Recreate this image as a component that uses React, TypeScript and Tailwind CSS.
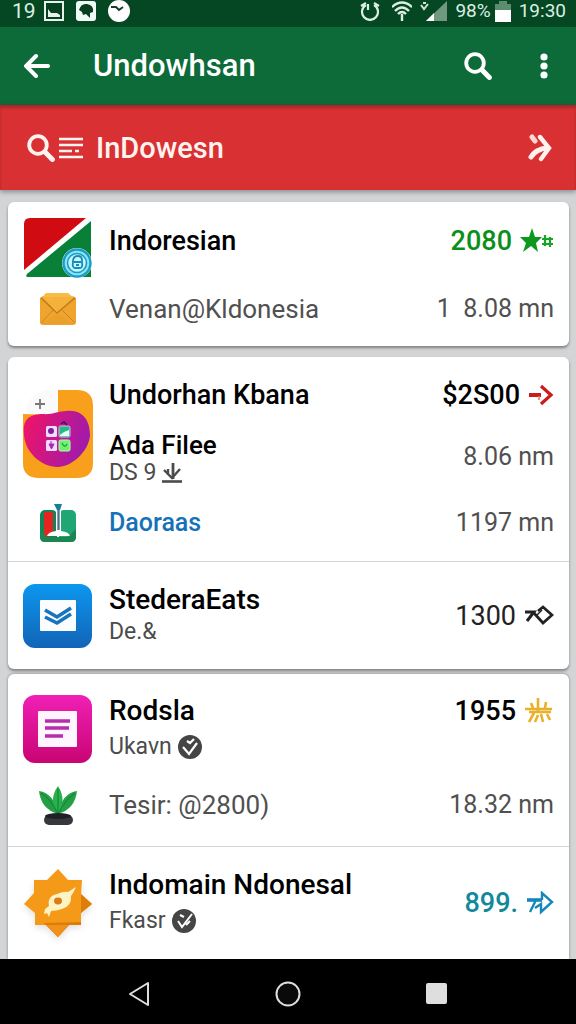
import React from 'react';

interface IconProps {
  className?: string;
}

const titleClass = 'text-[27px] leading-8 font-medium text-black';
const largeTitleClass = 'text-[28px] leading-8 font-medium text-black';
const textClass = 'text-[26px] leading-8 text-[#505050]';
const subClass = 'flex items-center gap-1.5 text-[23px] leading-8 text-[#4c4c4c]';
const valueClass = 'text-[25px] leading-8 text-[#505050] whitespace-pre';

const SearchIcon = ({ className }: IconProps) => (
  <svg viewBox="0 0 28 28" className={className} fill="none" stroke="currentColor">
    <circle cx="11" cy="11" r="8.8" strokeWidth="3.8" />
    <path d="M18 18L25.4 25.4" strokeWidth="5" strokeLinecap="round" />
  </svg>
);

const FlagIcon = () => (
  <svg viewBox="0 0 70 62" className="w-[70px] h-[62px]">
    <path d="M7 1H63L1 53V7Q1 1 7 1Z" fill="#d00c12" />
    <path d="M68 4V60H5Q2 60 4 57Z" fill="#088038" />
    <circle cx="54" cy="46" r="15" fill="#fff" />
    <circle cx="54" cy="46" r="13.5" fill="#8be6f8" stroke="#1b9bc6" strokeWidth="2.4" />
    <circle cx="54" cy="46" r="9.5" fill="#c4f7ff" stroke="#1b9bc6" strokeWidth="1.6" />
    <path d="M50 45Q50 39 54.500 39Q59 39 59 43V45Q60 51 57 51H52Q49 51 50 45ZM51 45H58M53 48H56" fill="none" stroke="#168bb8" strokeWidth="1.8" />
  </svg>
);

const MailIcon = () => (
  <svg viewBox="0 0 38 34" className="w-[38px] h-[34px]">
    <path d="M6 2Q6 1 8 1H29L35 6V22H3V6Z" fill="#f8bb45" />
    <path d="M1 6L4 4L18 21L34 4L37 6V30Q37 33 34 33H4Q1 33 1 30Z" fill="#efa52d" />
    <path d="M4 5H34L19 20Z" fill="#f5b23b" />
    <path d="M2 32L18 22L36 32" fill="#eaa02a" />
    <path d="M2 31L14 18M36 31L23 18" stroke="#c98522" strokeWidth="1" />
    <path d="M2 6L18 21L36 6" fill="none" stroke="#bd7718" strokeWidth="1.3" />
  </svg>
);

const GalleryIcon = () => (
  <svg viewBox="0 0 70 90" className="w-[70px] h-[90px]">
    <defs>
      <linearGradient id="blob" x1="0" y1="0.3" x2="1" y2="0.6">
        <stop offset="0" stopColor="#ed1469" />
        <stop offset="1" stopColor="#9d1bae" />
      </linearGradient>
    </defs>
    <path d="M35 1H54Q70 1 70 17V74Q70 89 54 89H16Q0 89 0 74V25L35 26Z" fill="#f8a01c" />
    <path d="M35 1V25H3Q3 8 21 1Z" fill="#fafafa" />
    <path d="M1 46C-1 29 8 25 20 25C28 26 36 22 43 22C61 20 67 33 67 46C66 63 48 78 35 78C18 78 2 63 1 46Z" fill="url(#blob)" />
    <path d="M17 10V20M12 15H22" stroke="#777" strokeWidth="1.8" />
    <rect x="23" y="37" width="11" height="11" rx="1.500" fill="#f2dcff" />
    <rect x="36" y="37" width="11" height="11" rx="1.500" fill="#27b884" stroke="#c6c8f0" />
    <rect x="23" y="51" width="11" height="11" rx="1.500" fill="#f2dcff" />
    <rect x="36" y="51" width="11" height="11" rx="1.500" fill="#6ff26a" stroke="#b8f8c8" />
    <circle cx="28" cy="42" r="3" fill="#7b1fa2" />
    <path d="M26 55H31L28.500 60ZM28 52V58" fill="#a829b0" stroke="#a829b0" />
    <path d="M37 46L41 43L46 41V47H37Z" fill="#e2fff4" />
    <path d="M39 54Q42 60 44 55" stroke="#24a548" strokeWidth="1.5" fill="none" />
    <path d="M38 35L41 33L44 36" stroke="#43115b" strokeWidth="1.5" fill="none" />
  </svg>
);

const BookIcon = () => (
  <svg viewBox="0 0 38 40" className="w-[38px] h-10">
    <rect x="1" y="7" width="17" height="32" rx="5" fill="#138455" />
    <rect x="20" y="7" width="17" height="32" rx="5" fill="#20a574" />
    <path d="M1 26V34Q1 39 6 39H32Q37 39 37 34V26L29 34H9Z" fill="#188751" />
    <path d="M5 9H14V31L10 34Q5 34 5 28Z" fill="#e52421" />
    <path d="M17 7H22V28Q30 29 31 33H8Q9 29 17 28Z" fill="#fff" />
    <path d="M19.500 4V27" stroke="#53738a" strokeWidth="2.4" />
    <path d="M15 1H23L21 7H18Z" fill="#167e9d" />
  </svg>
);

const BlueAppIcon = () => (
  <svg viewBox="0 0 70 64" className="w-[70px] h-16">
    <defs>
      <linearGradient id="blue" x1="0" y1="0" x2="0" y2="1">
        <stop offset="0" stopColor="#0c97ee" />
        <stop offset="1" stopColor="#1264b7" />
      </linearGradient>
    </defs>
    <rect width="69" height="64" rx="12" fill="url(#blue)" />
    <rect x="17" y="16" width="36" height="31" rx="1" fill="#fbfdff" />
    <path d="M22 26L34 33L48 24M22 33L34 39L48 30" fill="none" stroke="#1975bb" strokeWidth="3.6" />
  </svg>
);

const PinkAppIcon = () => (
  <svg viewBox="0 0 70 68" className="w-[70px] h-[68px]">
    <defs>
      <linearGradient id="pink" x1="0" y1="0" x2="0" y2="1">
        <stop offset="0" stopColor="#f020b5" />
        <stop offset="1" stopColor="#c80573" />
      </linearGradient>
    </defs>
    <rect width="69" height="68" rx="12" fill="url(#pink)" />
    <rect x="15" y="16" width="39" height="36" rx="1" fill="#fff5ff" />
    <path d="M22 26H47M22 33H46M22 41H40" stroke="#b62eaa" strokeWidth="3.4" />
  </svg>
);

const PlantIcon = () => (
  <svg viewBox="0 0 40 40" className="w-10 h-10">
    <path d="M20 29Q3 24 1 6Q16 8 20 29Z" fill="#23a046" />
    <path d="M20 29Q37 24 39 6Q24 8 20 29Z" fill="#23a046" />
    <path d="M20 1Q10 15 20 29Q29 15 20 1Z" fill="#2bb04e" />
    <path d="M3 8Q14 15 20 29Q27 15 37 8M20 4V28" fill="none" stroke="#0d7931" strokeWidth="0.9" />
    <rect x="6" y="30" width="29" height="10" rx="5" fill="#37383d" />
    <ellipse cx="20" cy="31" rx="13" ry="3" fill="#202125" />
  </svg>
);

const BadgeIcon = () => (
  <svg viewBox="0 0 70 70" className="w-[70px] h-[70px] drop-shadow-md">
    <path d="M35 1L45 12H59L58 26L69 36L58 45V57H46L35 69L23 57H12V45L1 36L11 25V12H24Z" fill="#f59a18" />
    <path d="M20 55L58 54V57H46L35 69L23 57Z" fill="#dd7c08" />
    <path d="M35 57L46 57L35 69L23 57Z" fill="#f0921a" />
    <path d="M58 26L69 36L58 45Z" fill="#df7d0b" />
    <path d="M53 19Q51 24 48 28Q49 38 39 41Q33 43 28 43L26 49L24 45L21 46L22 41L26 38Q24 28 34 26Q41 23 45 24Z" fill="#fff3c4" />
    <ellipse cx="35" cy="33" rx="4" ry="3.4" fill="#d77d18" />
  </svg>
);

const StarIcon = () => (
  <svg viewBox="0 0 34 26" className="w-[34px] h-[26px]" fill="#0c981c">
    <path d="M12 0L15 9L22 9L16 15L18 24L11 18L3 24L6 15L0 9L9 9Z" />
    <path d="M22 11H33M22 16H33M25 7V18M30 9V19" stroke="#17a528" strokeWidth="2.2" />
  </svg>
);

const RedArrow = () => (
  <svg viewBox="0 0 26 24" className="w-[26px] h-6" fill="none" stroke="#c91c1c">
    <path d="M1 12H13" strokeWidth="4" />
    <path d="M13 3L23 12L13 21" strokeWidth="3.2" />
    <path d="M11 17V13" strokeWidth="1.6" stroke="#e77a70" />
  </svg>
);

const DiamondArrow = () => (
  <svg viewBox="0 0 30 24" className="w-[30px] h-6" fill="none" stroke="#222">
    <path d="M9 8L19 19L28 11L19 3L14 7" strokeWidth="2.8" />
    <path d="M1 8H10L3 17" strokeWidth="3" />
    <path d="M12 12L18 6" strokeWidth="1.4" />
  </svg>
);

const SparkIcon = () => (
  <svg viewBox="0 0 30 26" className="w-[30px] h-[26px]" fill="none" stroke="#e8b128" strokeWidth="2.6">
    <path d="M1 11H28M5 14H27M14 0V13M7 5L9 10M22 4L21 10M10 15L5 24M14 17L11 24M17 16L19 24M23 16L26 22" />
  </svg>
);

const BlueArrow = () => (
  <svg viewBox="0 0 28 24" className="w-7 h-6" fill="none" stroke="#1488bd">
    <path d="M1 9H16" strokeWidth="3.6" />
    <path d="M10 9L4 21M16 9V2L26 11L15 21V13L9 17" strokeWidth="2.4" />
  </svg>
);

const CheckBadge = ({ slash }: { slash?: boolean }) => (
  <svg viewBox="0 0 24 24" className="w-6 h-6">
    <circle cx="12" cy="12" r="12" fill="#454545" />
    {slash ? (
      <path d="M6 12L10 18L20 5M8 6L12 8M14 16L18 12" fill="none" stroke="#fff" strokeWidth="2" />
    ) : (
      <path d="M5 12L11 19L19 8M9 6L12 8L16 4" fill="none" stroke="#fff" strokeWidth="2.2" />
    )}
  </svg>
);

const DownloadIcon = () => (
  <svg viewBox="0 0 20 20" className="w-5 h-5" fill="none" stroke="#4c4c4c">
    <path d="M11 0V16" strokeWidth="2.8" />
    <path d="M2 7L10 15L18 6M6 6V12" strokeWidth="2.4" />
    <path d="M0 18.500H20" strokeWidth="2.6" />
  </svg>
);

const Price = ({ value, color, icon }: { value: string; color: string; icon: React.ReactNode }) => (
  <div className={`flex items-center gap-2 text-[27px] leading-8 ${color}`}>
    <span>{value}</span>
    {icon}
  </div>
);

const IconCell = ({ children, className = '' }: { children: React.ReactNode; className?: string }) => (
  <div className={`w-[70px] shrink-0 flex justify-center ${className}`}>{children}</div>
);

const StatusBar = () => (
  <div className="h-[27px] pb-[5px] pl-3 pr-[10px] flex items-center justify-between bg-[#044722] text-[#dcefe2] text-[21px] leading-5">
    <div className="flex items-center gap-3">
      <span className="-mr-1">19</span>
      <svg viewBox="0 0 20 20" className="w-5 h-5">
        <rect x="1" y="1" width="18" height="18" fill="#064020" stroke="#e6f2ea" strokeWidth="2" />
        <path d="M4 16V8L7 12H13L16 14V16Z" fill="#e6f2ea" />
      </svg>
      <svg viewBox="0 0 20 20" className="w-5 h-5">
        <rect width="20" height="20" rx="3" fill="#f2faf5" />
        <path d="M3 9Q5 2 11 3Q18 4 17 11L14 12V17L10 13L7 14L6 11Z" fill="#073f20" />
      </svg>
      <svg viewBox="0 0 22 22" className="w-[22px] h-[22px]">
        <circle cx="11" cy="11" r="11" fill="#fff" />
        <path d="M3 7L8 7L11 10L15 7" fill="none" stroke="#173d27" strokeWidth="2" />
      </svg>
    </div>
    <div className="flex items-center gap-2">
      <svg viewBox="0 0 20 20" className="w-5 h-5 mr-1" fill="none" stroke="currentColor" strokeWidth="2.2">
        <path d="M6 4A8 8 0 1 0 14 4M1 5L6 2M19 5L14 2M8 3V9" />
      </svg>
      <svg viewBox="0 0 20 20" className="w-5 h-5" fill="none" stroke="currentColor" strokeWidth="2.4">
        <path d="M0 6Q10-3 20 6M3 10Q10 3 17 10M6 13Q10 9 14 13M10 13V20" />
      </svg>
      <svg viewBox="0 0 27 20" className="w-[27px] h-5">
        <path d="M27 0V20H6Z" fill="#6f9a80" />
        <path d="M14 12V20H6Z" fill="#fff" />
        <path d="M1 4L4 8L8 3M3 2H6" fill="none" stroke="#cde4d4" strokeWidth="2" />
      </svg>
      <span className="text-[19px]">98%</span>
      <svg viewBox="0 0 16 21" className="w-4 h-[21px] -ml-1">
        <path d="M4 0H12V3H16V10H0V3H4Z" fill="#5d8c70" />
        <rect y="9" width="16" height="12" fill="#fff" />
      </svg>
      <span className="text-[19px]">19:30</span>
    </div>
  </div>
);

const App: React.FC = () => {
  return (
    <div className="min-h-screen flex flex-col bg-[#d2d4d6] font-[Roboto,sans-serif]">
      <StatusBar />

      <header className="h-[78px] pl-6 pr-5 flex items-center bg-[#0d6b3a] text-white">
        <button aria-label="Back" className="mr-[43px]">
          <svg viewBox="0 0 26 26" className="w-[26px] h-[26px]" fill="none" stroke="currentColor" strokeWidth="4" strokeLinecap="round">
            <path d="M12 3L2 13L12 23M3 13H24" />
          </svg>
        </button>
        <h1 className="flex-1 text-[31px] leading-10 font-medium">Undowhsan</h1>
        <button aria-label="Search" className="mr-10">
          <SearchIcon className="w-7 h-7" />
        </button>
        <button aria-label="More" className="w-6 flex justify-center">
          <svg viewBox="0 0 8 26" className="w-2 h-[26px]" fill="currentColor">
            <circle cx="4" cy="4" r="3.6" />
            <circle cx="4" cy="13" r="3.6" />
            <circle cx="4" cy="22" r="3.6" />
          </svg>
        </button>
      </header>

      <div className="h-[85px] pl-[27px] pr-6 flex items-center bg-[#d93033] text-[#fff3f0] shadow-[0_2px_5px_rgba(0,0,0,0.35),inset_0_3px_3px_rgba(0,0,0,0.2)]">
        <button className="flex flex-1 items-center text-left text-[29px] leading-10 font-medium">
          <SearchIcon className="w-7 h-7 mr-1" />
          <svg viewBox="0 0 24 22" className="w-6 h-[22px] mr-[13px]" stroke="currentColor" strokeWidth="2.6">
            <path d="M0 2H24M0 8H24M0 14H13M16 14H20M0 20H24" />
          </svg>
          InDowesn
        </button>
        <button aria-label="Next">
          <svg viewBox="0 0 24 28" className="w-6 h-7" fill="none" stroke="currentColor" strokeLinecap="round">
            <path d="M4 3L7 7" strokeWidth="5" stroke="#ffd9d4" />
            <path d="M12 3L21 14L13 25" strokeWidth="4.4" />
            <path d="M19 14Q8 15 3 23" strokeWidth="5" />
          </svg>
        </button>
      </div>

      <main className="flex-1 flex flex-col pt-3 pl-2 pr-[7px]">
        <section className="mb-[11px] pl-[15px] pr-[15px] bg-white rounded-md shadow-[0_2px_3px_rgba(0,0,0,0.4)]">
          <div className="h-[77px] flex items-center gap-4">
            <IconCell className="self-end">
              <FlagIcon />
            </IconCell>
            <h2 className={`flex-1 ${titleClass}`}>Indoresian</h2>
            <Price value="2080" color="text-[#0c8f18] font-medium" icon={<StarIcon />} />
          </div>
          <div className="h-[67px] pb-2 flex items-center gap-4">
            <IconCell>
              <MailIcon />
            </IconCell>
            <p className={`flex-1 ${textClass}`}>Venan@Kldonesia</p>
            <span className={valueClass}>1  8.08 mn</span>
          </div>
        </section>

        <section className="mb-[5px] bg-white rounded-md shadow-[0_2px_3px_rgba(0,0,0,0.4)]">
          <div className="px-[15px] flex gap-4">
            <IconCell className="pt-8">
              <GalleryIcon />
            </IconCell>
            <div className="flex-1 pt-[22px]">
              <div className="flex justify-between">
                <h2 className={titleClass}>Undorhan Kbana</h2>
                <Price value="$2S00" color="text-black font-medium" icon={<RedArrow />} />
              </div>
              <div className="mt-[18px] flex items-center justify-between">
                <div>
                  <h3 className="text-[26px] leading-8 text-black font-medium">Ada Filee</h3>
                  <p className="flex items-center gap-1.5 text-[23px] leading-6 text-[#4c4c4c]">
                    DS 9 <DownloadIcon />
                  </p>
                </div>
                <span className={valueClass}>8.06 nm</span>
              </div>
            </div>
          </div>
          <div className="h-[76px] px-[15px] flex items-center gap-4">
            <IconCell>
              <BookIcon />
            </IconCell>
            <a href="#" className="flex-1 text-[25px] leading-8 font-medium text-[#1672b8]">
              Daoraas
            </a>
            <span className={valueClass}>1197 mn</span>
          </div>
          <div className="h-[108px] px-[15px] flex items-center gap-4 border-t border-[#d6d6d6]">
            <IconCell>
              <BlueAppIcon />
            </IconCell>
            <div className="flex-1">
              <h2 className={largeTitleClass}>StederaEats</h2>
              <p className={subClass}>De.&amp;</p>
            </div>
            <Price value="1300" color="text-[#222]" icon={<DiamondArrow />} />
          </div>
        </section>

        <section className="flex-1 bg-white rounded-t-md shadow-[0_0_3px_rgba(0,0,0,0.4)]">
          <div className="pt-[21px] px-[15px] flex items-start gap-4">
            <IconCell>
              <PinkAppIcon />
            </IconCell>
            <div className="flex-1 flex flex-col gap-1">
              <h2 className={largeTitleClass}>Rodsla</h2>
              <p className={subClass}>
                Ukavn <CheckBadge />
              </p>
            </div>
            <Price value="1955" color="text-black font-medium" icon={<SparkIcon />} />
          </div>
          <div className="h-[83px] px-[15px] flex items-center gap-4">
            <IconCell>
              <PlantIcon />
            </IconCell>
            <p className={`flex-1 ${textClass}`}>Tesir: @2800)</p>
            <span className={valueClass}>18.32 nm</span>
          </div>
          <div className="h-[112px] px-[15px] flex items-center gap-4 border-t border-[#d6d6d6]">
            <IconCell>
              <BadgeIcon />
            </IconCell>
            <div className="flex-1 flex flex-col gap-1">
              <h2 className={largeTitleClass}>Indomain Ndonesal</h2>
              <p className={subClass}>
                Fkasr <CheckBadge slash />
              </p>
            </div>
            <Price value="899." color="text-[#10899d] font-medium" icon={<BlueArrow />} />
          </div>
        </section>
      </main>

      <nav className="h-[65px] px-[65px] pt-1 grid grid-cols-3 items-center justify-items-center bg-black text-[#dedede]">
        <button aria-label="Back">
          <svg viewBox="0 0 22 26" className="w-[22px] h-[26px]" fill="none" stroke="currentColor" strokeWidth="2">
            <path d="M20 2V24L2 13Z" strokeLinejoin="round" />
          </svg>
        </button>
        <button aria-label="Home">
          <svg viewBox="0 0 26 26" className="w-[26px] h-[26px]" fill="#0a0a0a" stroke="currentColor" strokeWidth="2">
            <circle cx="13" cy="13" r="11.500" />
          </svg>
        </button>
        <button aria-label="Recent apps" className="w-[21px] h-[21px] rounded-xs bg-[#dedede]" />
      </nav>
    </div>
  );
};

export default App;
